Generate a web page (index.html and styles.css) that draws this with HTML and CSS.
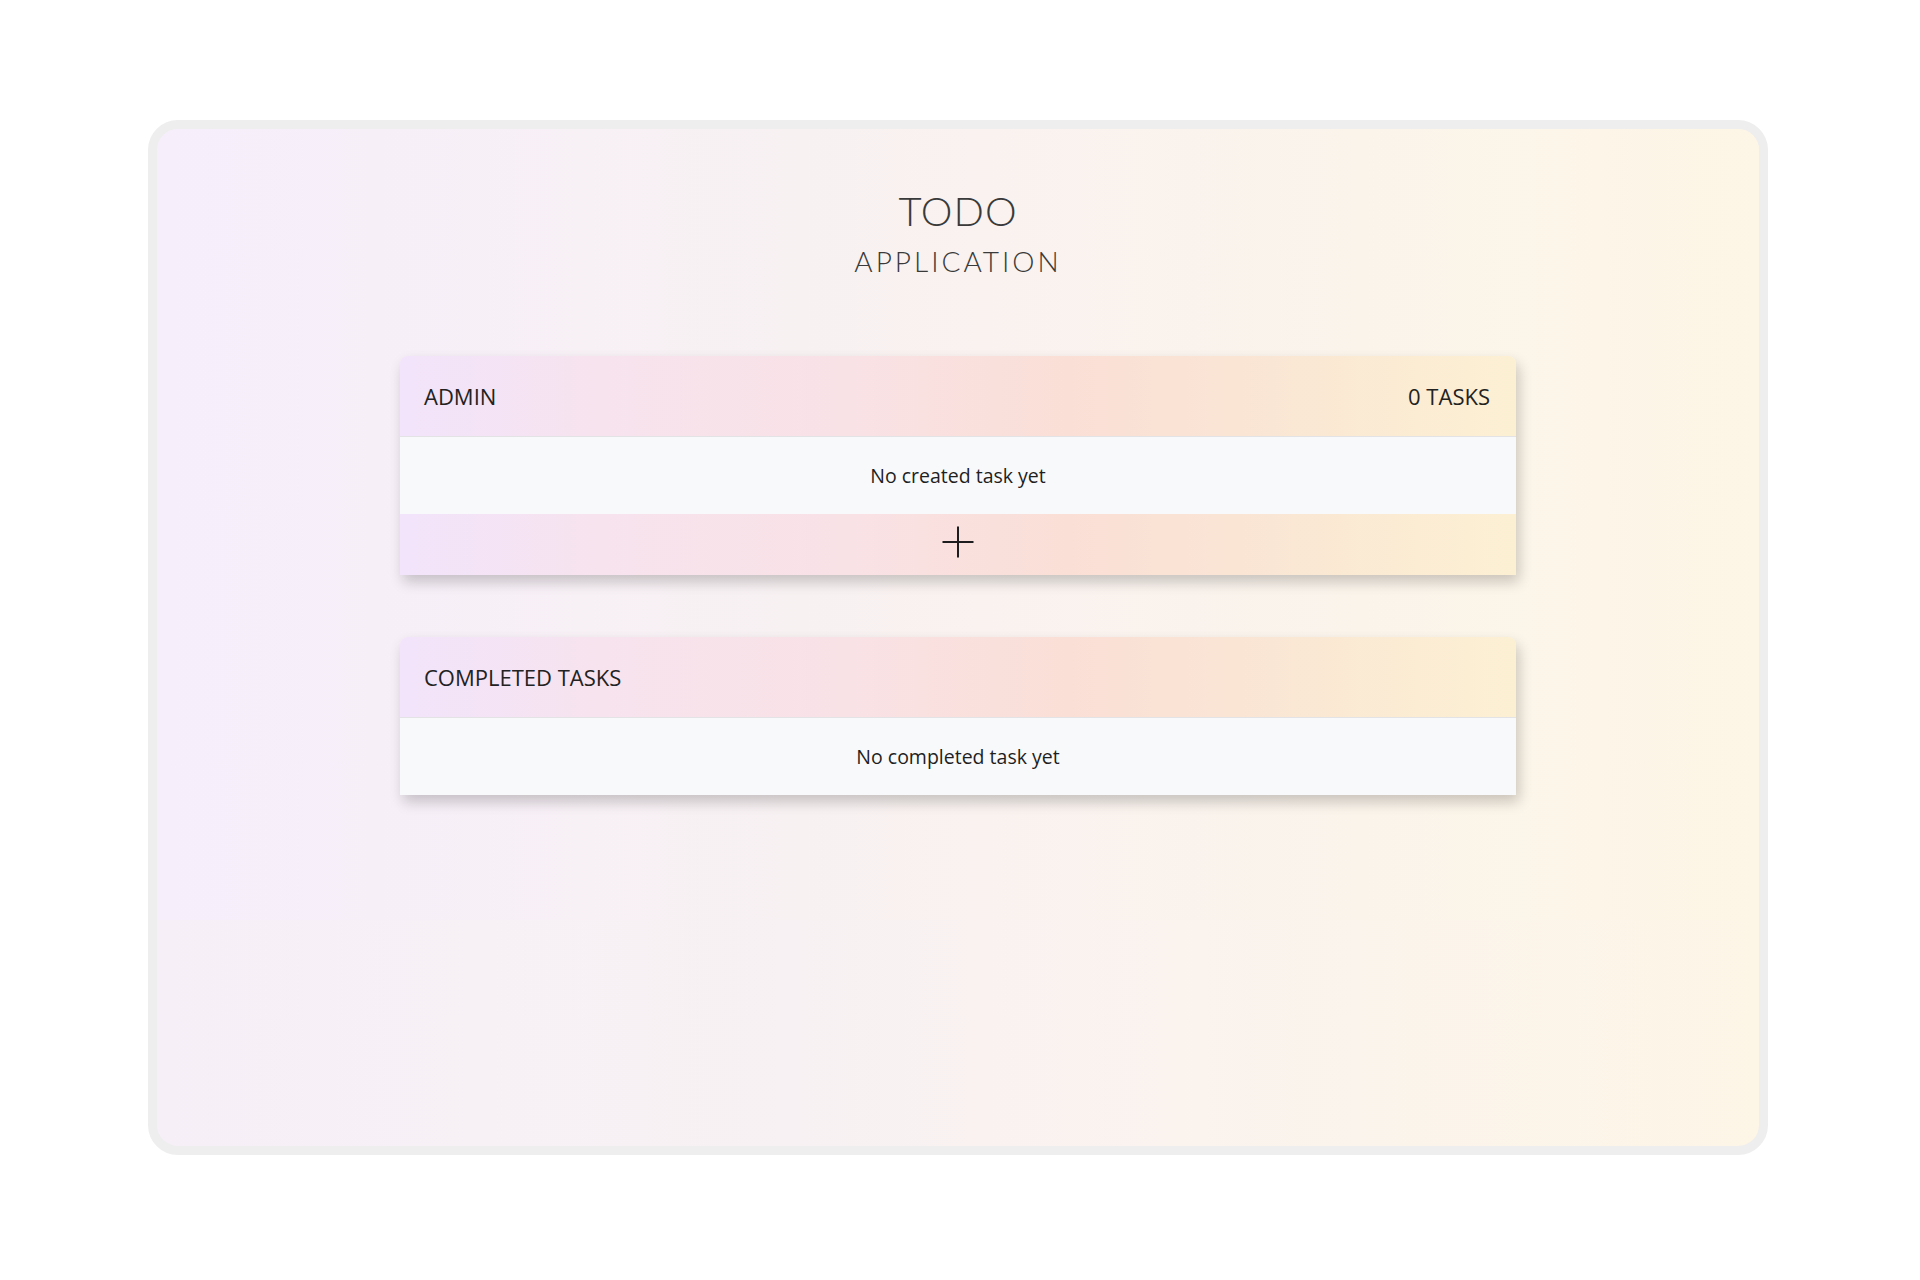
FILE: index.html
```html
<!DOCTYPE html>
<html lang="en">
<head>
<meta charset="utf-8">
<title>Todo Application</title>
<link rel="stylesheet" href="styles.css">
</head>
<body>
<div class="frame">
  <div class="app">
    <header class="title">
      <h1 class="title-main">TODO</h1>
      <h2 class="title-sub">APPLICATION</h2>
    </header>

    <section class="card">
      <div class="card-head">
        <span class="card-name">ADMIN</span>
        <span class="card-count">0 TASKS</span>
      </div>
      <div class="card-body">No created task yet</div>
      <div class="card-foot">
        <svg class="plus" width="32" height="32" viewBox="0 0 32 32" aria-hidden="true">
          <path d="M16 0.5V31.5M0.5 16H31.5" stroke="#1d1d1f" stroke-width="2" fill="none"/>
        </svg>
      </div>
    </section>

    <section class="card card-completed">
      <div class="card-head">
        <span class="card-name">COMPLETED TASKS</span>
      </div>
      <div class="card-body">No completed task yet</div>
    </section>
  </div>
</div>
</body>
</html>
```

FILE: styles.css
```css
* { box-sizing: border-box; }

html, body {
  margin: 0;
  padding: 0;
  background: #ffffff;
}

body {
  font-family: "Open Sans", "Liberation Sans", sans-serif;
  color: #222222;
  padding-top: 120px;
}

.frame {
  width: 1620px;
  height: 1035px;
  margin: 0 0 0 148px;
  border: 9px solid #eeeeee;
  border-radius: 30px;
  overflow: hidden;
  background: linear-gradient(90deg, #f6eff7 0%, #f8f1f3 40%, #fbf4ec 75%, #fdf5e6 100%);
}

.app {
  min-height: 791px;
  padding-top: 58px;
  background: linear-gradient(90deg, #f6eefb 0%, #f8f1f2 40%, #fbf4eb 75%, #fdf6e6 100%);
}

.title {
  text-align: center;
  margin-bottom: 78px;
}

.title-main {
  margin: 0;
  font-family: "Lato", "Open Sans", sans-serif;
  font-weight: 300;
  font-size: 40px;
  line-height: 48px;
  letter-spacing: 1px;
  color: #3a3a3a;
}

.title-sub {
  margin: 9px 0 0;
  font-family: "Lato", "Open Sans", sans-serif;
  font-weight: 300;
  font-size: 28px;
  line-height: 34px;
  letter-spacing: 3px;
  color: #3a3a3a;
}

.card {
  width: 1116px;
  margin: 0 auto;
  border-radius: 8px 8px 0 0;
  box-shadow: 3px 7px 14px rgba(0, 0, 0, 0.2);
}

.card-completed {
  margin-top: 62px;
}

.card-head,
.card-foot {
  background: linear-gradient(90deg, #f2e4fb 0%, #f7e3ee 18%, #f9e2e6 40%, #fadfd6 60%, #fae6d4 78%, #fcf0d3 100%);
}

.card-head {
  height: 81px;
  padding: 0 26px 0 24px;
  display: flex;
  align-items: center;
  justify-content: space-between;
  border-bottom: 1px solid #e3e3e6;
  border-radius: 8px 8px 0 0;
  font-size: 22px;
  color: #222222;
}

.card-body {
  height: 77px;
  display: flex;
  align-items: center;
  justify-content: center;
  background: #f8f9fb;
  font-size: 19.5px;
  color: #1f1f1f;
}

.card-foot {
  height: 61px;
  display: flex;
  align-items: center;
  justify-content: center;
  padding-bottom: 6px;
}

.plus {
  display: block;
}
```
